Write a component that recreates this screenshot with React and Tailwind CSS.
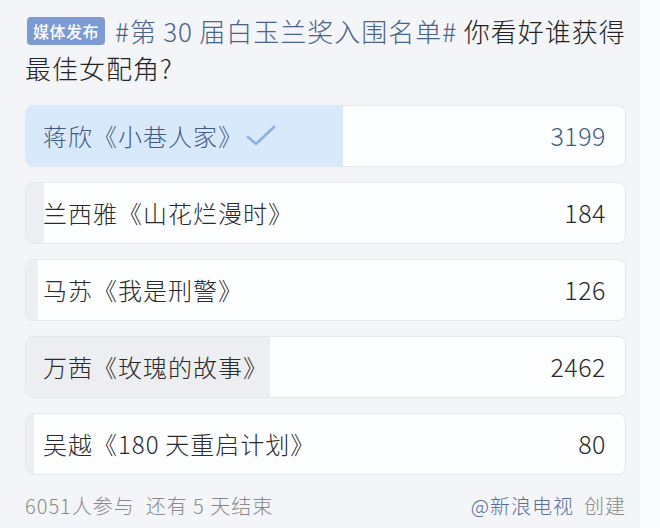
import React from "react";

const total = 6051;

const options = [
  { name: "蒋欣《小巷人家》", votes: 3199, picked: true },
  { name: "兰西雅《山花烂漫时》", votes: 184 },
  { name: "马苏《我是刑警》", votes: 126 },
  { name: "万茜《玫瑰的故事》", votes: 2462 },
  { name: "吴越《180\u2009天重启计划》", votes: 80 },
];

const font = { fontFamily: '"Noto Sans CJK SC", "Noto Sans", sans-serif' };

const CheckMark = () => (
  <svg width="32" height="24" viewBox="0 0 32 24" className="ml-[2px]">
    <path
      d="M3 13 L11 20 L29 3"
      fill="none"
      stroke="#8eb0e2"
      strokeWidth="2.6"
      strokeLinecap="round"
      strokeLinejoin="round"
    />
  </svg>
);

const Option = ({ name, votes, picked }) => {
  const pct = Math.max((votes / total) * 100, 1.3);
  return (
    <div className="relative h-[62px] rounded-lg border border-[#e3e6eb] bg-[#fdfeff] overflow-hidden">
      <div
        className={`absolute inset-y-0 left-0 ${picked ? "bg-[#d8e9fb]" : "bg-[#edeef1]"}`}
        style={{ width: `${pct}%` }}
      />
      <div className="relative flex h-full items-center justify-between pl-[17px] pr-[19px]">
        <div className={`flex items-center text-[24px] font-light tracking-[1px] ${picked ? "text-[#3f5b84]" : "text-[#2a2a2a]"}`}>
          <span>{name}</span>
          {picked && <CheckMark />}
        </div>
        <span className={`text-[25px] font-light tracking-[0.5px] ${picked ? "text-[#3f5b84]" : "text-[#2a2a2a]"}`}>{votes}</span>
      </div>
    </div>
  );
};

export default function App() {
  return (
    <div className="flex h-[528px] w-[660px] bg-[#fafbfc]" style={font}>
      <div className="w-[640px] bg-[#f3f5f8] pl-[25px] pr-[14px] pt-[12px]">
        <div className="text-[26px] font-light leading-[37px] tracking-[1px] text-[#222]">
          <span className="ml-[2px] mr-[10px] inline-block rounded-[4px] bg-[#7c9bd4] px-[6px] align-[4px] text-[16px] font-medium leading-[28px] tracking-[0.5px] text-white">
            媒体发布
          </span>
          <span className="text-[#4a6389]">#第{"\u2009"}30{"\u2009"}届白玉兰奖入围名单#</span>
          <span> 你看好谁获得</span>
          <br />
          <span>最佳女配角?</span>
        </div>
        <div className="mt-[19px] flex flex-col gap-[15px]">
          {options.map((o) => (
            <Option key={o.name} {...o} />
          ))}
        </div>
        <div className="mt-[16px] flex items-center justify-between text-[20px] font-light tracking-[1px]">
          <span className="text-[#8a8a8a]">6051人参与&nbsp;&nbsp;还有 5 天结束</span>
          <span>
            <span className="text-[#5b7098]">@新浪电视</span>
            <span className="ml-[10px] text-[#8a8a8a]">创建</span>
          </span>
        </div>
      </div>
    </div>
  );
}
